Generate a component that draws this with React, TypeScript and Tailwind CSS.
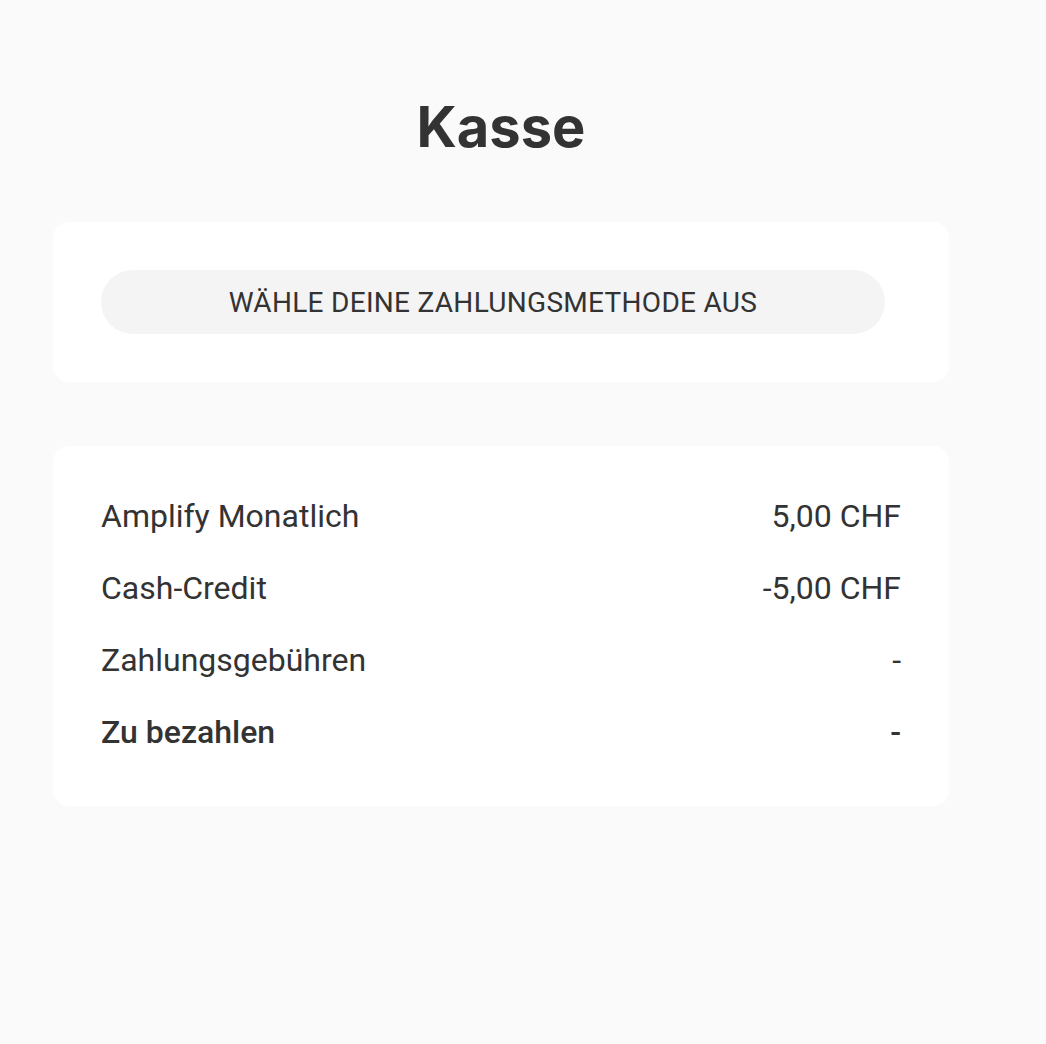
const rows = [
  { label: "Amplify Monatlich", value: "5,00 CHF" },
  { label: "Cash-Credit", value: "-5,00 CHF" },
  { label: "Zahlungsgebühren", value: "-" },
  { label: "Zu bezahlen", value: "-", bold: true },
];

export default function App() {
  return (
    <div className="min-h-screen bg-[#fafafa] text-[#333333] font-['Roboto',sans-serif]">
      <div className="ml-[53px] w-[896px] pt-[93px] pb-20">
        <h1 className="text-center font-['Inter',sans-serif] font-bold text-[56px] leading-[68px] mb-[61px]">
          Kasse
        </h1>

        <div className="bg-white rounded-2xl p-12">
          <button className="w-[784px] h-16 pt-px rounded-full bg-[#f4f4f4] text-[28px] tracking-[0.3px] uppercase text-[#333333]">
            Wähle deine Zahlungsmethode aus
          </button>
        </div>

        <div className="bg-white rounded-2xl px-12 pt-[46px] pb-[50px] mt-16 flex flex-col gap-6">
          {rows.map((row) => (
            <div
              key={row.label}
              className={`flex justify-between items-center text-[32px] leading-[48px] ${row.bold ? "font-medium" : ""}`}
            >
              <span>{row.label}</span>
              <span>{row.value}</span>
            </div>
          ))}
        </div>
      </div>
    </div>
  );
}
